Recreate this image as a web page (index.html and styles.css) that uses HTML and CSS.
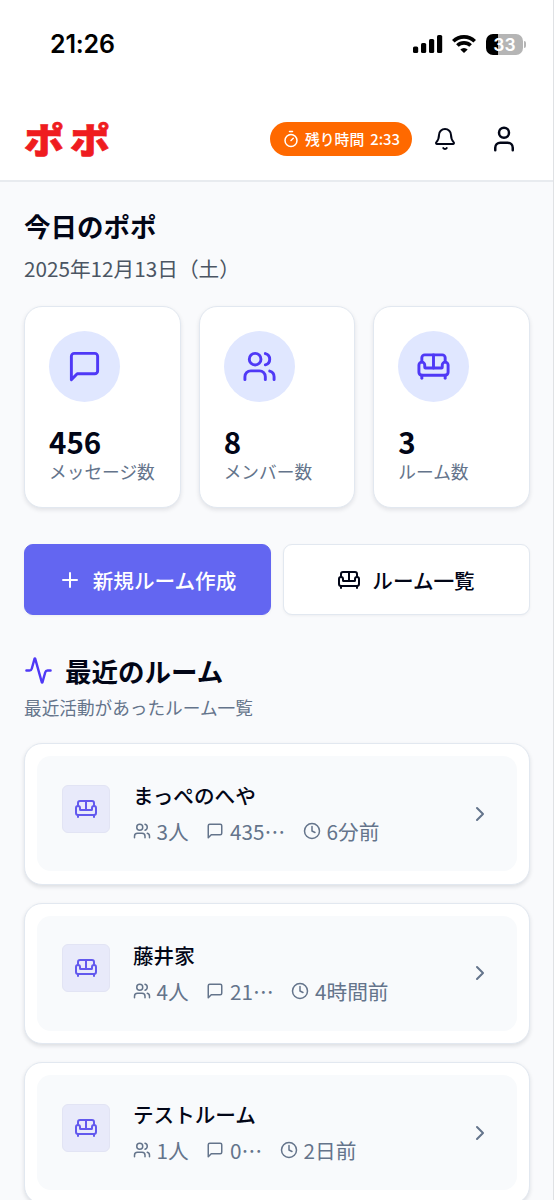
FILE: index.html
```html
<!DOCTYPE html>
<html lang="ja">
<head>
<meta charset="utf-8">
<title>ポポ</title>
<link rel="stylesheet" href="styles.css">
</head>
<body>
<svg class="sprite" aria-hidden="true">
  <symbol id="message" viewBox="0 0 24 24"><path d="M21 15a2 2 0 0 1-2 2H7l-4 4V5a2 2 0 0 1 2-2h14a2 2 0 0 1 2 2z"/></symbol>
  <symbol id="users" viewBox="0 0 24 24"><path d="M16 21v-2a4 4 0 0 0-4-4H6a4 4 0 0 0-4 4v2"/><circle cx="9" cy="7" r="4"/><path d="M22 21v-2a4 4 0 0 0-3-3.87"/><path d="M16 3.13a4 4 0 0 1 0 7.75"/></symbol>
  <symbol id="sofa" viewBox="0 0 24 24"><path d="M20 9V6a2 2 0 0 0-2-2H6a2 2 0 0 0-2 2v3"/><path d="M2 16a2 2 0 0 0 2 2h16a2 2 0 0 0 2-2v-5a2 2 0 0 0-4 0v1.500a.5.5 0 0 1-.5.5h-11a.5.5 0 0 1-.5-.5V11a2 2 0 0 0-4 0z"/><path d="M4 18v2"/><path d="M20 18v2"/><path d="M12 4v9"/></symbol>
  <symbol id="clock" viewBox="0 0 24 24"><circle cx="12" cy="12" r="10"/><path d="M12 6v6l4 2"/></symbol>
  <symbol id="chevron" viewBox="0 0 24 24"><path d="m9 18 6-6-6-6"/></symbol>
</svg>
<div class="app">
  <div class="status">
    <span class="time">21:26</span>
    <div class="status-icons">
      <svg class="signal" viewBox="0 0 30 20"><rect x="0" y="12.500" width="5.200" height="6.500" rx="1.600"/><rect x="8" y="9" width="5.200" height="10" rx="1.600"/><rect x="16" y="5" width="5.200" height="14" rx="1.600"/><rect x="24" y="1" width="5.200" height="18" rx="1.600"/></svg>
      <svg class="wifi" viewBox="0 0 26 20"><path d="M2.300 7.200a15.300 15.300 0 0 1 21.400 0"/><path d="M6.400 11.500a9.400 9.400 0 0 1 13.200 0"/><path class="wifi-dot" d="M13 19l-3.700-3.600a5.300 5.300 0 0 1 7.400 0z"/></svg>
      <div class="battery"><span>33</span></div>
      <i class="battery-cap"></i>
    </div>
  </div>
  <header class="header">
    <div class="logo"><span>ポポ</span></div>
    <div class="pill">
      <svg class="icon" viewBox="0 0 24 24"><path d="M10 2h4"/><path d="m12 14 3-3"/><circle cx="12" cy="14" r="8"/></svg>
      <span>残り時間</span><span class="remain">2:33</span>
    </div>
    <svg class="icon bell" viewBox="0 0 24 24"><path d="M10.268 21a2 2 0 0 0 3.464 0"/><path d="M3.262 15.326A1 1 0 0 0 4 17h16a1 1 0 0 0 .740-1.673C19.410 13.956 18 12.499 18 8A6 6 0 0 0 6 8c0 4.499-1.411 5.956-2.738 7.326"/></svg>
    <svg class="icon user" viewBox="0 0 24 24"><path d="M19 21v-2a4 4 0 0 0-4-4H9a4 4 0 0 0-4 4v2"/><circle cx="12" cy="7" r="4"/></svg>
  </header>
  <main class="main">
    <h1 class="title">今日のポポ</h1>
    <p class="date">2025年12月13日（土）</p>
    <section class="stats">
      <div class="stat"><div class="circle"><svg class="icon"><use href="#message"/></svg></div><strong>456</strong><span>メッセージ数</span></div>
      <div class="stat"><div class="circle"><svg class="icon"><use href="#users"/></svg></div><strong>8</strong><span>メンバー数</span></div>
      <div class="stat"><div class="circle"><svg class="icon"><use href="#sofa"/></svg></div><strong>3</strong><span>ルーム数</span></div>
    </section>
    <div class="actions">
      <button class="button primary"><svg class="icon" viewBox="0 0 24 24"><path d="M5 12h14"/><path d="M12 5v14"/></svg>新規ルーム作成</button>
      <button class="button"><svg class="icon"><use href="#sofa"/></svg>ルーム一覧</button>
    </div>
    <h2 class="title recent"><svg class="icon" viewBox="0 0 24 24"><path d="M22 12h-2.480a2 2 0 0 0-1.930 1.460l-2.350 8.360a.25.25 0 0 1-.480 0L9.240 2.180a.25.25 0 0 0-.480 0l-2.350 8.360A2 2 0 0 1 4.490 12H2"/></svg>最近のルーム</h2>
    <p class="sub">最近活動があったルーム一覧</p>
    <section class="rooms">
      <article class="room"><div class="room-inner">
        <div class="avatar"><svg class="icon"><use href="#sofa"/></svg></div>
        <div class="info"><h3>まっぺのへや</h3><div class="meta">
          <span><svg class="icon"><use href="#users"/></svg>3人</span><span><svg class="icon"><use href="#message"/></svg>435…</span><span><svg class="icon"><use href="#clock"/></svg>6分前</span></div></div>
        <svg class="icon chevron"><use href="#chevron"/></svg>
      </div></article>
      <article class="room"><div class="room-inner">
        <div class="avatar"><svg class="icon"><use href="#sofa"/></svg></div>
        <div class="info"><h3>藤井家</h3><div class="meta">
          <span><svg class="icon"><use href="#users"/></svg>4人</span><span><svg class="icon"><use href="#message"/></svg>21…</span><span><svg class="icon"><use href="#clock"/></svg>4時間前</span></div></div>
        <svg class="icon chevron"><use href="#chevron"/></svg>
      </div></article>
      <article class="room"><div class="room-inner">
        <div class="avatar"><svg class="icon"><use href="#sofa"/></svg></div>
        <div class="info"><h3>テストルーム</h3><div class="meta">
          <span><svg class="icon"><use href="#users"/></svg>1人</span><span><svg class="icon"><use href="#message"/></svg>0…</span><span><svg class="icon"><use href="#clock"/></svg>2日前</span></div></div>
        <svg class="icon chevron"><use href="#chevron"/></svg>
      </div></article>
    </section>
  </main>
</div>
</body>
</html>
```
FILE: styles.css
```css
* { box-sizing: border-box; margin: 0; padding: 0; }
body { font-family: "Noto Sans CJK JP", sans-serif; color: #020617; background: #f9fafc; }
.sprite { display: none; }
.app { height: 1200px; overflow: hidden; border-right: 1px solid #dfe1e4; }
.icon { display: block; flex: none; width: 24px; height: 24px; fill: none; stroke: currentColor; stroke-width: 2; stroke-linecap: round; stroke-linejoin: round; }

.status { height: 98px; padding: 30px 27px 0 50px; display: flex; justify-content: space-between; align-items: flex-start; background: #fff; color: #000; }
.time { font: 600 25px/29px Inter, sans-serif; letter-spacing: -0.2px; }
.status-icons { display: flex; align-items: center; height: 28px; }
.signal { width: 30px; height: 20px; }
.wifi { width: 26px; height: 20px; margin-left: 8px; fill: none; stroke: #000; stroke-width: 3.7; }
.wifi .wifi-dot { fill: #000; stroke: none; }
.battery { width: 37px; height: 21px; margin-left: 9px; border-radius: 7px; background: linear-gradient(90deg, #000 12px, #b5b5b5 12px); color: #fff; text-align: center; font: 600 17.500px/21px Inter, sans-serif; }
.battery-cap { width: 2px; height: 7px; margin-left: 1px; border-radius: 0 3px 3px 0; background: #b5b5b5; }

.header { height: 84px; padding: 0 34px 0 24px; display: flex; align-items: center; background: #fff; border-bottom: 2px solid #e8ebef; }
.logo { flex: 1; font-size: 40px; font-weight: 900; line-height: 56px; letter-spacing: 6px; color: #ef1c1f; -webkit-text-stroke: 0.8px #ef1c1f; }
.logo span { display: inline-block; transform: scaleY(0.91); }
.pill { height: 34px; width: 142px; padding-left: 12px; display: flex; align-items: center; border-radius: 17px; background: #ff6900; color: #fff; font-size: 14.8px; font-weight: 500; line-height: 34px; }
.pill .icon { width: 18px; height: 18px; margin-right: 5px; }
.remain { margin-left: 6px; }
.bell { margin-left: 21px; }
.user { width: 30px; height: 30px; margin-left: 32px; }

.main { padding: 23px 23px 0 24px; }
.title { font-size: 26.500px; font-weight: 600; line-height: 41px; }
.date { margin-top: 7px; font-size: 20.700px; line-height: 30px; color: #4b5563; }
.stats { margin-top: 23px; display: grid; grid-template-columns: repeat(3, 1fr); gap: 18px; }
.stat { height: 202px; padding: 24px 0 0 24px; border: 1.500px solid #e2e8f0; border-radius: 18px; background: #fff; box-shadow: 0 2px 4px rgb(15 23 42 / 10%); }
.circle { width: 71px; height: 71px; margin-bottom: 22px; display: grid; place-items: center; border-radius: 50%; background: #e0e7ff; color: #4f39f6; }
.circle .icon { width: 35px; height: 35px; }
.stat strong { display: block; font-size: 29.500px; line-height: 35px; }
.stat span { display: block; font-size: 17.700px; line-height: 24px; color: #64748b; }

.actions { margin-top: 36px; display: grid; grid-template-columns: 1fr 1fr; gap: 12px; }
.button { height: 71px; padding-right: 1px; display: flex; align-items: center; justify-content: center; gap: 11px; border: 1.500px solid #e2e8f0; border-radius: 9px; background: #fff; color: #020617; font: 500 20.600px/30px "Noto Sans CJK JP", sans-serif; box-shadow: 0 1px 3px rgb(15 23 42 / 5%); }
.primary { border-color: #6366f1; background: #6366f1; color: #fff; }

.recent { margin-top: 35px; display: flex; align-items: center; gap: 12px; }
.recent .icon { width: 29px; height: 29px; color: #4f39f6; }
.sub { margin-top: 3px; font-size: 17.650px; line-height: 27px; color: #64748b; }
.rooms { margin-top: 22px; display: grid; gap: 18px; }
.room { height: 141.700px; padding: 12px; border: 1.500px solid #e2e8f0; border-radius: 18px; background: #fff; box-shadow: 0 2px 4px rgb(15 23 42 / 12%); }
.room-inner { height: 115px; padding: 0 25px 0 24px; display: flex; align-items: center; border-radius: 14px; background: #f8fafc; }
.avatar { width: 48px; height: 48px; margin: -10px 23px 0 1px; display: grid; place-items: center; border: 1px solid #e2e4f4; border-radius: 6px; background: #e8eafa; color: #6259ee; }
.avatar .icon { width: 24px; height: 24px; }
.info { flex: 1; margin-top: -1px; }
.info h3 { font-size: 20.600px; font-weight: 500; line-height: 36px; }
.meta { display: flex; gap: 17.700px; font-size: 20.700px; line-height: 36px; color: #64748b; }
.meta span { display: flex; align-items: center; gap: 5.600px; }
.meta .icon { width: 18px; height: 18px; }
.chevron { color: #64748b; }
```
